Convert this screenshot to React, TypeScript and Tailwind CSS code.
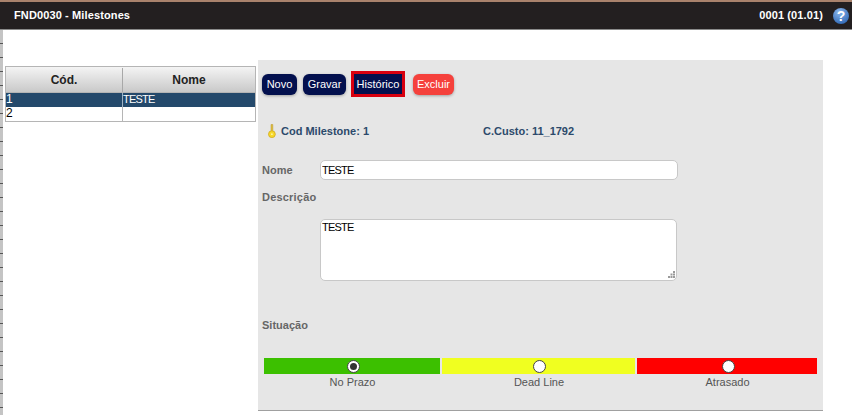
const FONT = "font-['Liberation_Sans',Arial,sans-serif]";

const SITUACOES = [
  { label: "No Prazo", width: "w-[176px]", color: "bg-[#3cc000]", checked: true },
  { label: "Dead Line", width: "w-[193px]", color: "bg-[#f0ff20]", checked: false },
  { label: "Atrasado", width: "w-[180px]", color: "bg-[#ff0000]", checked: false },
];

function KeyIcon() {
  return (
    <svg width="10" height="14" viewBox="0 0 10 14" className="shrink-0">
      <path d="M4 0.5 h1.8 v7 h-1.8 z" fill="#e0c040" stroke="#b8962a" strokeWidth="0.5" />
      <circle cx="4.9" cy="10.2" r="3.4" fill="#f7d92a" stroke="#d1a81f" strokeWidth="0.8" />
      <circle cx="4.9" cy="10.2" r="0.9" fill="#fff3a8" />
    </svg>
  );
}

function HelpIcon() {
  return (
    <div className="w-[16px] h-[16px] rounded-full bg-[radial-gradient(circle_at_40%_25%,#8db8ee,#1c57a8)] flex items-center justify-center text-white text-[14px] font-bold leading-none">
      ?
    </div>
  );
}

function ResizeGrip() {
  return (
    <svg width="7" height="7" viewBox="0 0 7 7" className="absolute right-[2px] bottom-[3px]" fill="#9a9a9a">
      <rect x="5" y="0" width="2" height="2" />
      <rect x="2.5" y="2.5" width="2" height="2" />
      <rect x="5" y="2.5" width="2" height="2" />
      <rect x="0" y="5" width="2" height="2" />
      <rect x="2.5" y="5" width="2" height="2" />
      <rect x="5" y="5" width="2" height="2" />
    </svg>
  );
}

function Radio({ checked }: { checked: boolean }) {
  return (
    <div className="w-[13px] h-[13px] ml-[2px] rounded-full bg-white border border-[#444] flex items-center justify-center">
      {checked && <div className="w-[7px] h-[7px] rounded-full bg-[#333]" />}
    </div>
  );
}

function Grid() {
  return (
    <div className="w-[251px] border border-[#b5b5b5] text-[12px] leading-[13px]">
      <div className="flex h-[26px] pt-[1px] bg-gradient-to-b from-[#f4f4f4] to-[#c9c9c9] border-b border-[#b5b5b5] font-bold text-[#222]">
        <div className="w-[117px] border-r border-[#a8a8a8] flex items-center justify-center">Cód.</div>
        <div className="flex-1 flex items-center justify-center">Nome</div>
      </div>
      <div className="flex h-[14px] bg-[#24496b] text-white">
        <div className="w-[117px] border-r border-[#9fb2c4]">1</div>
        <div className="flex-1 text-[11px] tracking-[-0.8px]">TESTE</div>
      </div>
      <div className="flex h-[14px] bg-white text-black">
        <div className="w-[117px] border-r border-[#b5b5b5]">2</div>
        <div className="flex-1"></div>
      </div>
    </div>
  );
}

function Toolbar() {
  const btn = "h-[21px] rounded-[6px] bg-[#03104e] text-white text-[11px] font-normal flex items-center justify-center shadow-[0_1px_3px_rgba(0,0,0,0.3)]";
  return (
    <div className="flex items-center h-[26px]">
      <div className={`${btn} w-[35px] ml-[4px]`}>Novo</div>
      <div className={`${btn} w-[43px] ml-[6px]`}>Gravar</div>
      <div className="w-[54px] h-[26px] ml-[5px] border-[3px] border-[#d8000f] bg-[#03104e] text-white text-[11px] font-normal flex items-center justify-center">
        Histórico
      </div>
      <div className="h-[21px] w-[41px] ml-[8px] rounded-[6px] bg-[#f5413c] text-white text-[11px] font-normal flex items-center justify-center shadow-[0_1px_3px_rgba(0,0,0,0.3)]">
        Excluir
      </div>
    </div>
  );
}

export default function App() {
  return (
    <div className={`w-[852px] h-[415px] overflow-hidden bg-white flex flex-col ${FONT}`}>
      <div className="h-[2px] bg-[#a9826c]" />
      <div className="h-[28px] bg-[#231f20] border-b border-[#8a8a8a] flex items-center justify-between pl-[14px] pr-[3px] text-white text-[11px] font-bold tracking-[0.12px]">
        <span>FND0030 - Milestones</span>
        <div className="flex items-center gap-[10px]">
          <span>0001 (01.01)</span>
          <HelpIcon />
        </div>
      </div>

      <div className="flex-1 flex">
        <div className="w-[3px] shrink-0 bg-[#c4c4c4] bg-[repeating-linear-gradient(to_bottom,transparent_0px,transparent_13px,#555_13px,#555_14px)]" />
        <div className="w-[255px] shrink-0 pt-[36px] pl-[2px]">
          <Grid />
        </div>

        <div className="w-[565px] h-[351px] mt-[30px] bg-[#e6e6e6] border-b border-[#a0a0a0] flex flex-col text-[11px] font-bold text-[#666]">
          <div className="pt-[11px]">
            <Toolbar />
          </div>

          <div className="flex items-center h-[14px] mt-[27px] pl-[9px] text-[#2c4a6b]">
            <KeyIcon />
            <span className="ml-[4px] w-[202px]">Cod Milestone: 1</span>
            <span>C.Custo: 11_1792</span>
          </div>

          <div className="flex items-center mt-[22px] pl-[4px]">
            <span className="w-[58px]">Nome</span>
            <input
              readOnly
              value="TESTE"
              className="w-[358px] h-[20px] bg-white border border-[#c8c8c8] rounded-[5px] px-[1px] text-[11px] tracking-[-0.8px] font-normal text-black outline-none"
            />
          </div>

          <div className="mt-[11px] pl-[4px] h-[13px] leading-[13px] tracking-[0.2px]">Descrição</div>

          <div className="relative w-[357px] h-[62px] ml-[62px] mt-[15px] shrink-0">
            <textarea
              readOnly
              value="TESTE"
              className="w-full h-full bg-white border border-[#c8c8c8] rounded-[5px] px-[1px] text-[11px] leading-[14px] tracking-[-0.8px] font-normal text-black outline-none resize-none block"
            />
            <ResizeGrip />
          </div>

          <div className="mt-[38px] pl-[4px] h-[13px] leading-[13px]">Situação</div>

          <div className="flex mt-[26px] ml-[6px] gap-[2px] font-normal text-[#555]">
            {SITUACOES.map((s) => (
              <div key={s.label} className={`${s.width} flex flex-col items-center`}>
                <div className={`w-full h-[16px] ${s.color} flex items-center justify-center`}>
                  <Radio checked={s.checked} />
                </div>
                <span className="mt-[2px] ml-[1px] leading-[13px]">{s.label}</span>
              </div>
            ))}
          </div>
        </div>
      </div>
    </div>
  );
}
